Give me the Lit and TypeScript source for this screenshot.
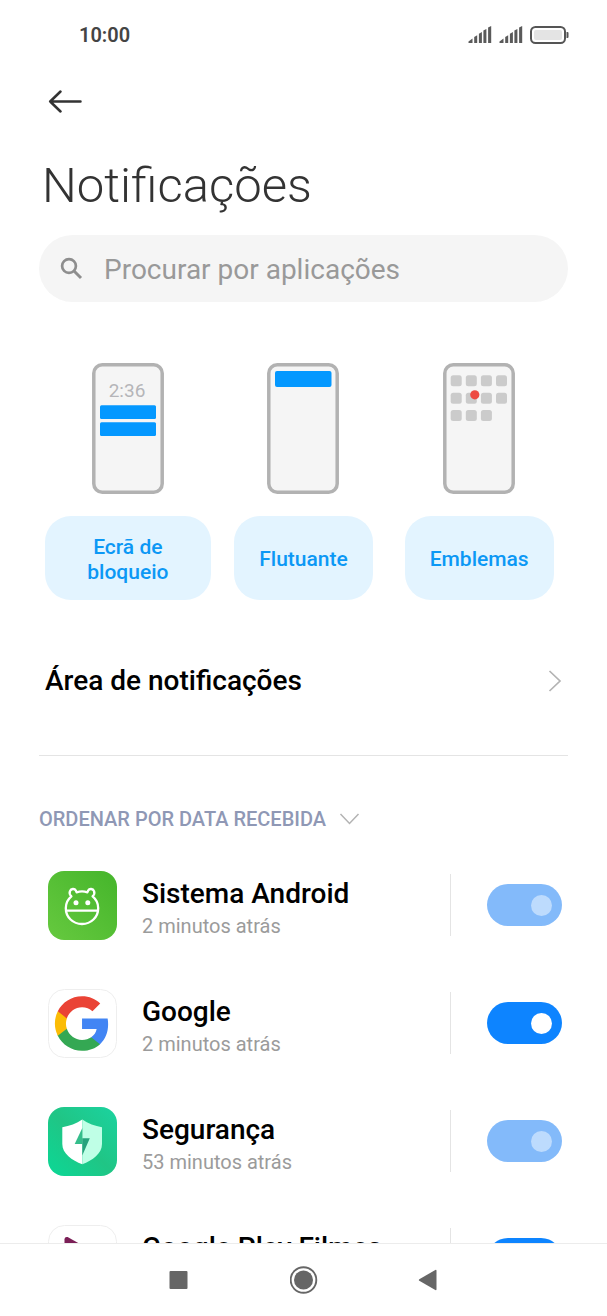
import { LitElement, html, css, svg, TemplateResult } from "lit";
import { customElement, property, state } from "lit/decorators.js";

interface AppEntry {
  id: string;
  name: string;
  received: string;
  enabled: boolean;
  locked: boolean;
}

const androidIcon = html`
  <svg viewBox="0 0 69 69" aria-hidden="true">
    <defs>
      <linearGradient id="g-android" x1="0" y1="1" x2="1" y2="0">
        <stop offset="0" stop-color="#66c93f" />
        <stop offset="1" stop-color="#45b52b" />
      </linearGradient>
    </defs>
    <rect width="69" height="69" rx="16" fill="url(#g-android)" />
    <g fill="none" stroke="#fff" stroke-width="2.3" stroke-linejoin="round" stroke-linecap="round">
      <path d="M23.4 25.4C22 24 21.2 21.800 22 20 C23 17.600 26.600 17.200 27.800 19.600 L28.600 21.300 C32 20.100 36 20.100 39.400 21.300 L40.200 19.600 C41.400 17.200 45 17.600 46 20 C46.800 21.800 46 24 44.600 25.400 C48.200 28.300 50.200 32.300 50.200 37.200 C50.200 46.300 43 53 34 53 C25 53 17.800 46.300 17.800 37.200 C17.800 32.300 19.800 28.300 23.400 25.400 Z" />
      <path d="M18.200 39.600H49.800" />
    </g>
    <circle cx="28" cy="31.800" r="2.500" fill="#fff" />
    <circle cx="39.800" cy="31.800" r="2.500" fill="#fff" />
  </svg>
`;

const googleIcon = html`
  <svg viewBox="0 0 69 69" aria-hidden="true">
    <rect x=".5" y=".5" width="68" height="68" rx="16" fill="#fff" stroke="#eee" />
    <g transform="translate(4.400 4.900) scale(2.470)">
      <path fill="#4285f4" d="M22.560 12.250c0-.780-.070-1.530-.200-2.250H12v4.260h5.920c-.260 1.370-1.040 2.530-2.210 3.310v2.770h3.570c2.080-1.920 3.280-4.740 3.280-8.090z" />
      <path fill="#34a853" d="M12 23c2.970 0 5.460-.980 7.280-2.660l-3.570-2.770c-.980.660-2.230 1.060-3.710 1.060-2.860 0-5.290-1.930-6.160-4.530H2.180v2.840C3.990 20.530 7.700 23 12 23z" />
      <path fill="#fbbc05" d="M5.840 14.090c-.220-.660-.350-1.360-.350-2.090s.130-1.430.350-2.090V7.070H2.180C1.430 8.550 1 10.220 1 12s.430 3.450 1.180 4.930l3.660-2.840z" />
      <path fill="#ea4335" d="M12 5.380c1.620 0 3.060.560 4.210 1.640l3.150-3.150C17.450 2.090 14.970 1 12 1 7.700 1 3.990 3.470 2.180 7.070l3.660 2.840c.870-2.600 3.300-4.530 6.160-4.530z" />
    </g>
  </svg>
`;

const securityIcon = html`
  <svg viewBox="0 0 69 69" aria-hidden="true">
    <defs>
      <linearGradient id="g-security" x1="0" y1="1" x2="1" y2="0">
        <stop offset="0" stop-color="#0bd896" />
        <stop offset=".5" stop-color="#20c585" />
        <stop offset="1" stop-color="#1bd3a0" />
      </linearGradient>
    </defs>
    <rect width="69" height="69" rx="16" fill="url(#g-security)" />
    <path fill="#fff" d="M34.300 12.600 C28.500 16.800 21.500 19 14.300 20.200 V37 C14.300 46.500 24 53.500 34.300 57.300 Z" />
    <path fill="#bfffe6" d="M34.300 12.600 C40 16.800 47 19 54 20.200 V37 C54 46.500 44.500 53.500 34.300 57.300 Z" />
    <path fill="#35bd8b" d="M34.300 21 L26.700 37 H34.300 Z" />
    <path fill="#27a27c" d="M34.300 21 V48.500 L41.800 31.300 H34.300 Z" />
  </svg>
`;

const moviesIcon = html`
  <svg viewBox="0 0 69 69" aria-hidden="true">
    <rect x=".5" y=".5" width="68" height="68" rx="16" fill="#fff" stroke="#eee" />
    <path fill="#7b1f57" d="M16.500 14.500 C16.500 12.300 18.500 11.500 20.500 12.500 L54 31.500 C56.500 33 56.500 36 54 37.500 L20.500 56.500 C18.500 57.500 16.500 56.500 16.500 54.500 Z" />
  </svg>
`;

const icons: Record<string, TemplateResult> = {
  android: androidIcon,
  google: googleIcon,
  security: securityIcon,
  movies: moviesIcon,
};

@customElement("status-bar")
class StatusBar extends LitElement {
  static styles = css`
    :host {
      display: flex;
      align-items: center;
      justify-content: space-between;
      height: 70px;
      padding: 0 38px 0 79px;
      color: #444;
    }
    .time {
      font-size: 20px;
      line-height: 24px;
      font-weight: 600;
    }
    .indicators {
      display: flex;
      align-items: center;
      gap: 7px;
    }
    svg {
      display: block;
    }
  `;

  private signal() {
    return html`
      <svg width="24" height="18" viewBox="0 0 24 18" aria-hidden="true">
        <g fill="#5a5a5a">
          <path d="M.5 17 V15.500 L4.500 12.500 V17 Z" />
          <path d="M6.200 17 V11 L9.200 9.200 V17 Z" />
          <path d="M10.900 17 V7.700 L13.900 6 V17 Z" />
          <path d="M15.400 17 V4.600 L18.400 3 V17 Z" />
          <path d="M20.100 17 V1.500 L23.200 0 V17 Z" />
        </g>
      </svg>
    `;
  }

  render() {
    return html`
      <span class="time">10:00</span>
      <span class="indicators">
        ${this.signal()} ${this.signal()}
        <svg width="39" height="18" viewBox="0 0 39 18" aria-hidden="true">
          <rect x="1" y="1" width="34" height="16" rx="4.500" fill="#fff" stroke="#555" stroke-width="2" />
          <rect x="4" y="4" width="28" height="10" rx="2" fill="#e4e4e4" />
          <path d="M36.500 6 H37.500 Q38.500 6 38.500 7 V11 Q38.500 12 37.500 12 H36.500 Z" fill="#555" />
        </svg>
      </span>
    `;
  }
}

@customElement("style-option")
class StyleOption extends LitElement {
  @property() label = "";
  @property() kind = "lock";

  static styles = css`
    :host {
      display: flex;
      flex-direction: column;
      align-items: center;
      gap: 22px;
      padding: 0 5px;
    }
    svg {
      display: block;
      width: 72px;
      height: 131px;
    }
    .clock {
      font-size: 19px;
      fill: #b5b5b9;
    }
    .pill {
      box-sizing: border-box;
      min-height: 84px;
      max-width: 100%;
      padding: 3px 25px 0;
      border: 0;
      border-radius: 26px;
      background: #e3f4ff;
      color: #0c98f5;
      font: 500 21px / 25px Roboto, sans-serif;
      cursor: pointer;
    }
  `;

  private art() {
    if (this.kind === "lock") {
      return svg`
        <text class="clock" x="35" y="34" text-anchor="middle">2:36</text>
        <rect x="8" y="42.300" width="56" height="13.700" rx="1.500" fill="#0498ff" />
        <rect x="8" y="59.300" width="56" height="13.700" rx="1.500" fill="#0498ff" />
      `;
    }
    if (this.kind === "float") {
      return svg`<rect x="8" y="8" width="56.500" height="16" rx="2" fill="#0498ff" />`;
    }
    const cells = Array.from({ length: 11 }, (_, i) => ({
      x: 7.7 + (i % 4) * 15.1,
      y: 12.3 + Math.floor(i / 4) * 17.4,
    }));
    return svg`
      ${cells.map((c) => svg`<rect x=${c.x} y=${c.y} width="11" height="11" rx="2.500" fill="#cbcbcb" />`)}
      <circle cx="31.800" cy="31.800" r="4.600" fill="#ed4a42" />
    `;
  }

  render() {
    return html`
      <svg viewBox="0 0 72 131" aria-hidden="true">
        <rect x="1.800" y="1.800" width="68.400" height="127.400" rx="8.500" fill="#f5f5f5" stroke="#b2b2b2" stroke-width="3.500" />
        ${this.art()}
      </svg>
      <button class="pill" type="button">${this.label}</button>
    `;
  }
}

@customElement("app-row")
class AppRow extends LitElement {
  @property({ attribute: false }) entry!: AppEntry;

  static styles = css`
    :host {
      display: flex;
      align-items: center;
      height: 118px;
      padding: 0 6px 0 9px;
    }
    .icon {
      flex: none;
      width: 69px;
      height: 69px;
      margin-right: 25px;
    }
    .icon svg {
      display: block;
      width: 100%;
      height: 100%;
    }
    .texts {
      flex: 1;
      min-width: 0;
      display: flex;
      flex-direction: column;
      padding-top: 5px;
    }
    .name {
      color: #000;
      font-size: 28px;
      line-height: 36px;
      font-weight: 500;
      white-space: nowrap;
    }
    .received {
      min-height: 28px;
      color: #9b9b9b;
      font-size: 20px;
      line-height: 28px;
    }
    .rule {
      flex: none;
      width: 1px;
      height: 62px;
      margin-right: 36px;
      background: #e4e4e4;
    }
    .switch {
      appearance: none;
      flex: none;
      display: flex;
      align-items: center;
      box-sizing: border-box;
      width: 75px;
      height: 42px;
      margin: 0;
      padding: 0 10px;
      border-radius: 21px;
      background: #d8d8d8;
      cursor: pointer;
    }
    .switch::before {
      content: "";
      width: 21px;
      height: 21px;
      border-radius: 50%;
      background: #fff;
    }
    .switch:checked {
      justify-content: flex-end;
      background: #0d84ff;
    }
    .switch:disabled {
      background: #83bafa;
      cursor: default;
    }
    .switch:disabled::before {
      background: #bddbfd;
    }
  `;

  render() {
    const e = this.entry;
    return html`
      <span class="icon">${icons[e.id]}</span>
      <label class="texts" for="toggle">
        <span class="name">${e.name}</span>
        <span class="received">${e.received}</span>
      </label>
      <span class="rule"></span>
      <input id="toggle" class="switch" type="checkbox" role="switch" .checked=${e.enabled} ?disabled=${e.locked} />
    `;
  }
}

@customElement("nav-bar")
class NavBar extends LitElement {
  static styles = css`
    :host {
      flex: none;
      display: flex;
      justify-content: center;
      height: 72px;
      border-top: 1px solid #ececec;
      background: #fff;
    }
    button {
      display: grid;
      place-items: center;
      width: 125px;
      padding: 0;
      border: 0;
      background: none;
      cursor: pointer;
    }
    svg {
      display: block;
      width: 28px;
      height: 28px;
      fill: #666;
    }
  `;

  render() {
    return html`
      <button type="button" aria-label="Recentes">
        <svg viewBox="0 0 28 28"><rect x="4.500" y="5" width="18" height="18" rx="1" /></svg>
      </button>
      <button type="button" aria-label="Início">
        <svg viewBox="0 0 28 28">
          <circle cx="13.500" cy="14" r="12.800" fill="none" stroke="#666" stroke-width="1.900" />
          <circle cx="13.500" cy="14" r="9.500" />
        </svg>
      </button>
      <button type="button" aria-label="Voltar">
        <svg viewBox="0 0 28 28">
          <path d="M4.300 13.200 L20.300 4 Q21.500 3.500 21.500 4.800 V23.200 Q21.500 24.500 20.300 24 L4.300 14.800 Q3.300 14 4.300 13.200 Z" />
        </svg>
      </button>
    `;
  }
}

@customElement("app-root")
class AppRoot extends LitElement {
  @state() private apps: AppEntry[] = [
    { id: "android", name: "Sistema Android", received: "2 minutos atrás", enabled: true, locked: true },
    { id: "google", name: "Google", received: "2 minutos atrás", enabled: true, locked: false },
    { id: "security", name: "Segurança", received: "53 minutos atrás", enabled: true, locked: true },
    { id: "movies", name: "Google Play Filmes", received: "", enabled: true, locked: false },
  ];

  static styles = css`
    :host {
      display: flex;
      flex-direction: column;
      height: 100vh;
      background: #fff;
      font-family: Roboto, sans-serif;
    }
    svg {
      display: block;
    }
    .back {
      align-self: flex-start;
      display: flex;
      align-items: center;
      height: 64px;
      padding: 0 12px;
      margin-left: 36px;
      border: 0;
      background: none;
      cursor: pointer;
    }
    .content {
      flex: 1;
      min-height: 0;
      overflow-y: auto;
      scrollbar-width: none;
      padding: 0 39px;
    }
    h1 {
      margin: 22px 0 19px;
      padding-left: 3px;
      color: #333;
      font-size: 49px;
      line-height: 60px;
      font-weight: 300;
    }
    .search {
      display: flex;
      align-items: center;
      gap: 21px;
      height: 67px;
      padding: 0 21px;
      border-radius: 34px;
      background: #f5f5f5;
    }
    .field {
      flex: 1;
      min-width: 0;
      padding: 2px 0 0;
      border: 0;
      outline: 0;
      background: none;
      color: #333;
      font: 400 28px / 36px Roboto, sans-serif;
    }
    .field::placeholder {
      color: #999;
      opacity: 1;
    }
    .options {
      display: grid;
      grid-template-columns: repeat(3, 1fr);
      margin-top: 61px;
      padding: 0 1px;
    }
    .link {
      display: flex;
      align-items: center;
      justify-content: space-between;
      height: 148px;
      margin-top: 7px;
      padding: 0 6px;
      color: #000;
      font-size: 28px;
      line-height: 36px;
      font-weight: 500;
      text-decoration: none;
    }
    .divider {
      height: 1px;
      margin: 0;
      border: 0;
      background: #e4e4e4;
    }
    .sort {
      display: flex;
      align-items: center;
      gap: 13px;
      height: 28px;
      margin: 49px 0 13px;
      padding: 0;
      border: 0;
      background: none;
      color: #8f98b5;
      font: 500 20px / 28px Roboto, sans-serif;
      text-transform: uppercase;
      cursor: pointer;
    }
  `;

  render() {
    return html`
      <status-bar></status-bar>
      <button class="back" type="button" aria-label="Voltar">
        <svg width="34" height="24" viewBox="0 0 34 24" fill="none" stroke="#333" stroke-width="2.500" stroke-linecap="round" stroke-linejoin="round">
          <path d="M12.500 1.500 L2.200 11.500 L12.500 21.500 M2.200 11.500 H32.500" />
        </svg>
      </button>
      <main class="content">
        <h1>Notificações</h1>
        <div class="search">
          <svg width="23" height="23" viewBox="0 0 23 23" fill="none" stroke="#8e8e8e" stroke-width="2.700" aria-hidden="true">
            <circle cx="9" cy="9" r="6.900" />
            <path d="M13.800 13.800 L21 21" stroke-width="3" />
          </svg>
          <input class="field" type="search" placeholder="Procurar por aplicações" aria-label="Procurar por aplicações" />
        </div>
        <section class="options">
          <style-option kind="lock" label="Ecrã de bloqueio"></style-option>
          <style-option kind="float" label="Flutuante"></style-option>
          <style-option kind="badge" label="Emblemas"></style-option>
        </section>
        <a class="link" href="#area">
          Área de notificações
          <svg width="14" height="22" viewBox="0 0 14 22" fill="none" stroke="#b3b3b3" stroke-width="1.700" aria-hidden="true">
            <path d="M1.500 1 L12 11 L1.500 21" />
          </svg>
        </a>
        <hr class="divider" />
        <button class="sort" type="button">
          Ordenar por data recebida
          <svg width="21" height="12" viewBox="0 0 21 12" fill="none" stroke="#b3b3b3" stroke-width="1.500" aria-hidden="true">
            <path d="M1.500 1 L10.500 10.500 L19.500 1" />
          </svg>
        </button>
        ${this.apps.map((a) => html`<app-row .entry=${a}></app-row>`)}
      </main>
      <nav-bar></nav-bar>
    `;
  }
}
